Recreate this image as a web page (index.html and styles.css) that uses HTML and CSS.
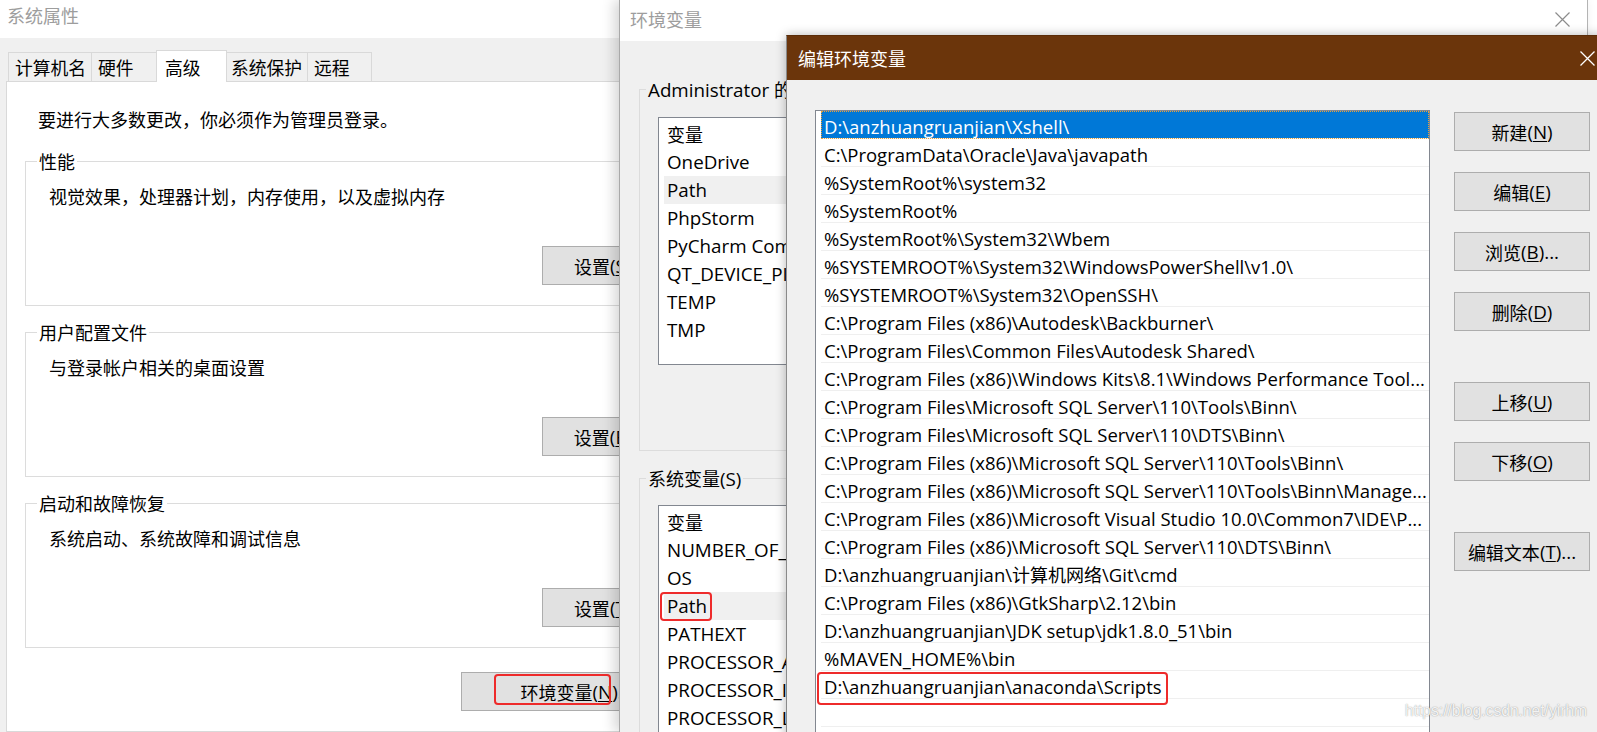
FILE: index.html
```html
<!DOCTYPE html>
<html lang="zh-CN">
<head>
<meta charset="utf-8">
<title>编辑环境变量</title>
<link rel="stylesheet" href="styles.css">
</head>
<body>
<div class="desk">

  <section class="win sys">
    <header class="sys-title">系统属性</header>
    <div class="sys-body">
      <nav class="tabs">
        <span class="tab">计算机名</span>
        <span class="tab">硬件</span>
        <span class="tab active">高级</span>
        <span class="tab">系统保护</span>
        <span class="tab">远程</span>
      </nav>
      <div class="panel">
        <p class="intro">要进行大多数更改，你必须作为管理员登录。</p>
        <fieldset class="grp first">
          <legend>性能</legend>
          <p class="desc">视觉效果，处理器计划，内存使用，以及虚拟内存</p>
          <div class="btnrow"><button class="btn set"><span class="zh">设置</span><span class="en">(<u>S</u>)...</span></button></div>
        </fieldset>
        <fieldset class="grp">
          <legend>用户配置文件</legend>
          <p class="desc">与登录帐户相关的桌面设置</p>
          <div class="btnrow"><button class="btn set"><span class="zh">设置</span><span class="en">(<u>E</u>)...</span></button></div>
        </fieldset>
        <fieldset class="grp">
          <legend>启动和故障恢复</legend>
          <p class="desc">系统启动、系统故障和调试信息</p>
          <div class="btnrow"><button class="btn set"><span class="zh">设置</span><span class="en">(<u>T</u>)...</span></button></div>
        </fieldset>
        <div class="envrow"><button class="btn envbtn"><span class="zh">环境变量</span><span class="en">(<u>N</u>)...</span><span class="redbox"></span></button></div>
      </div>
    </div>
  </section>

  <section class="win env">
    <header class="env-title">
      <span>环境变量</span>
      <svg class="close" width="15" height="15" viewBox="0 0 15 15"><path d="M0.5 0.5 L14.5 14.5 M14.5 0.5 L0.5 14.5" stroke="#8c8c8c" stroke-width="1.2" fill="none"/></svg>
    </header>
    <div class="env-body">
      <fieldset class="vgrp user">
        <legend><span class="en">Administrator </span><span class="zh">的用户变量(U)</span></legend>
        <div class="vlist short">
          <div class="vrow"><span class="zh">变量</span></div>
          <div class="vrow">OneDrive</div>
          <div class="vrow hi">Path</div>
          <div class="vrow">PhpStorm</div>
          <div class="vrow">PyCharm Community Edition</div>
          <div class="vrow">QT_DEVICE_PIXEL_RATIO</div>
          <div class="vrow">TEMP</div>
          <div class="vrow">TMP</div>
        </div>
      </fieldset>
      <fieldset class="vgrp system">
        <legend><span class="zh">系统变量</span><span class="en">(S)</span></legend>
        <div class="vlist tall">
          <div class="vrow"><span class="zh">变量</span></div>
          <div class="vrow">NUMBER_OF_PROCESSORS</div>
          <div class="vrow">OS</div>
          <div class="vrow hi mark">Path</div>
          <div class="vrow">PATHEXT</div>
          <div class="vrow">PROCESSOR_ARCHITECTURE</div>
          <div class="vrow">PROCESSOR_IDENTIFIER</div>
          <div class="vrow">PROCESSOR_LEVEL</div>
          <div class="vrow">PROCESSOR_REVISION</div>
        </div>
      </fieldset>
    </div>
  </section>

  <section class="win edit">
    <header class="edit-title">
      <span>编辑环境变量</span>
      <svg class="close" width="15" height="15" viewBox="0 0 15 15"><path d="M0.5 0.5 L14.5 14.5 M14.5 0.5 L0.5 14.5" stroke="#ffffff" stroke-width="1.3" fill="none"/></svg>
    </header>
    <div class="edit-body">
      <div class="plist">
        <div class="prow sel">D:\anzhuangruanjian\Xshell\</div>
        <div class="prow">C:\ProgramData\Oracle\Java\javapath</div>
        <div class="prow">%SystemRoot%\system32</div>
        <div class="prow">%SystemRoot%</div>
        <div class="prow">%SystemRoot%\System32\Wbem</div>
        <div class="prow">%SYSTEMROOT%\System32\WindowsPowerShell\v1.0\</div>
        <div class="prow">%SYSTEMROOT%\System32\OpenSSH\</div>
        <div class="prow">C:\Program Files (x86)\Autodesk\Backburner\</div>
        <div class="prow">C:\Program Files\Common Files\Autodesk Shared\</div>
        <div class="prow">C:\Program Files (x86)\Windows Kits\8.1\Windows Performance Tool...</div>
        <div class="prow">C:\Program Files\Microsoft SQL Server\110\Tools\Binn\</div>
        <div class="prow">C:\Program Files\Microsoft SQL Server\110\DTS\Binn\</div>
        <div class="prow">C:\Program Files (x86)\Microsoft SQL Server\110\Tools\Binn\</div>
        <div class="prow">C:\Program Files (x86)\Microsoft SQL Server\110\Tools\Binn\Manage...</div>
        <div class="prow">C:\Program Files (x86)\Microsoft Visual Studio 10.0\Common7\IDE\P...</div>
        <div class="prow">C:\Program Files (x86)\Microsoft SQL Server\110\DTS\Binn\</div>
        <div class="prow">D:\anzhuangruanjian\<span class="zh">计算机网络</span>\Git\cmd</div>
        <div class="prow">C:\Program Files (x86)\GtkSharp\2.12\bin</div>
        <div class="prow">D:\anzhuangruanjian\JDK setup\jdk1.8.0_51\bin</div>
        <div class="prow">%MAVEN_HOME%\bin</div>
        <div class="prow mark">D:\anzhuangruanjian\anaconda\Scripts</div>
        <div class="prow"></div>
        <div class="prow"></div>
      </div>
      <div class="pbtns">
        <button class="btn pbtn"><span class="zh">新建</span>(<u>N</u>)</button>
        <button class="btn pbtn"><span class="zh">编辑</span>(<u>E</u>)</button>
        <button class="btn pbtn"><span class="zh">浏览</span>(<u>B</u>)...</button>
        <button class="btn pbtn"><span class="zh">删除</span>(<u>D</u>)</button>
        <button class="btn pbtn gap"><span class="zh">上移</span>(<u>U</u>)</button>
        <button class="btn pbtn"><span class="zh">下移</span>(<u>O</u>)</button>
        <button class="btn pbtn gap"><span class="zh">编辑文本</span>(<u>T</u>)...</button>
      </div>
    </div>
  </section>

  <div class="watermark">https://blog.csdn.net/yirhm</div>
</div>
</body>
</html>
```

FILE: styles.css
```css
* { box-sizing: border-box; }

html, body {
  margin: 0;
  padding: 0;
}

body {
  width: 1597px;
  height: 732px;
  overflow: hidden;
  background: #ffffff;
  color: #000000;
  font-family: "Open Sans", "Noto Sans CJK SC", sans-serif;
  font-size: 18.8px;
}

.desk {
  position: relative;
  width: 1597px;
  height: 732px;
  overflow: hidden;
}

.zh {
  font-family: "Noto Sans CJK SC", "Open Sans", sans-serif;
  font-size: 18px;
}

.en {
  font-family: "Open Sans", "Noto Sans CJK SC", sans-serif;
  font-size: 18.8px;
}

u { text-decoration: underline; text-underline-offset: 2px; text-decoration-thickness: 1px; }

.win {
  position: absolute;
  top: 0;
}

/* ---------- 系统属性 ---------- */
.sys {
  left: 0;
  width: 720px;
  height: 732px;
  background: #ffffff;
  font-family: "Noto Sans CJK SC", "Open Sans", sans-serif;
  font-size: 18px;
}

.sys-title {
  height: 38px;
  display: flex;
  align-items: center;
  padding: 0 0 8px 7px;
  font-size: 18px;
  color: #9d9d9d;
}

.sys-body {
  background: #f0f0f0;
  height: 694px;
  padding: 12px 0 0 6px;
  display: flex;
  flex-direction: column;
}

.tabs {
  display: flex;
  align-items: flex-end;
  height: 31px;
  margin-left: 2px;
  position: relative;
  z-index: 1;
}

.tab {
  height: 29px;
  border: 1px solid #d9d9d9;
  border-bottom: none;
  margin-left: -1px;
  padding-left: 6px;
  display: flex;
  align-items: center;
  background: #f0f0f0;
  white-space: nowrap;
  font-size: 17.8px;
}

.tab:nth-child(1) { margin-left: 0; width: 84px; }
.tab:nth-child(2) { width: 66px; }
.tab:nth-child(3) { width: 71px; }
.tab:nth-child(4) { width: 82px; padding-left: 4px; }
.tab:nth-child(5) { width: 65px; }

.tab.active {
  height: 32px;
  margin-bottom: -1px;
  background: #ffffff;
  padding-left: 8px;
}

.panel {
  flex: 1;
  background: #ffffff;
  border: 1px solid #d9d9d9;
  border-right: none;
}

.intro {
  margin: 25px 0 0 31px;
  line-height: 24px;
}

.grp {
  margin: 14px 0 0 18px;
  width: 671px;
  min-width: 0;
  border: 1px solid #dcdcdc;
  padding: 0 0 20px 0;
}

.grp.first { margin-top: 18px; }

.grp legend {
  margin-left: 11px;
  padding: 0 2px;
  line-height: 24px;
}

.desc {
  margin: 11px 0 0 23px;
  line-height: 24px;
}

.btnrow {
  display: flex;
  justify-content: flex-end;
  padding-right: 17px;
  margin-top: 38px;
}

.btn {
  height: 39px;
  background: #e1e1e1;
  border: 1px solid #adadad;
  border-radius: 0;
  padding: 0;
  margin: 0;
  display: flex;
  align-items: center;
  justify-content: center;
  color: #000000;
  font-family: "Open Sans", "Noto Sans CJK SC", sans-serif;
  font-size: 18.8px;
  white-space: nowrap;
}

.btn .zh { font-size: 18px; }

.set { width: 136px; }

.envrow {
  display: flex;
  justify-content: flex-end;
  padding-right: 28px;
  margin-top: 24px;
}

.envbtn {
  width: 231px;
  position: relative;
}

.redbox {
  position: absolute;
  left: 32px;
  top: 1px;
  width: 117px;
  height: 31px;
  border: 2px solid #ee2b2b;
  border-radius: 4px;
}

/* ---------- 环境变量 ---------- */
.env {
  left: 619px;
  width: 969px;
  height: 732px;
  background: #f0f0f0;
  border-left: 1px solid #a9a9a9;
  border-right: 1px solid #b4b4b4;
  box-shadow: -5px 0 12px rgba(0, 0, 0, 0.16);
}

.env-title {
  height: 41px;
  background: #ffffff;
  display: flex;
  align-items: center;
  padding: 0 17px 3px 10px;
  font-family: "Noto Sans CJK SC", sans-serif;
  font-size: 18px;
  color: #9d9d9d;
}

.close { margin-left: auto; display: block; }

.env-body {
  padding: 36px 0 0 19px;
}

.vgrp {
  margin: 0;
  width: 900px;
  min-width: 0;
  border: 1px solid #dcdcdc;
  padding: 0;
}

.vgrp legend {
  margin-left: 6px;
  padding: 0 2px;
  line-height: 24px;
}

.vgrp.user { padding-bottom: 85px; }
.vgrp.system { margin-top: 15px; }

.vlist {
  margin: 15px 0 0 18px;
  width: 520px;
  background: #ffffff;
  border: 1px solid #828790;
  padding-top: 2px;
}

.vlist.short { height: 248px; }
.vlist.tall { margin-top: 14px; height: 300px; }

.vrow {
  height: 28px;
  line-height: 28px;
  margin-left: 5px;
  padding-left: 3px;
  white-space: nowrap;
  overflow: hidden;
}

.vrow.hi { background: #f0f0f0; }

.vrow.mark { position: relative; overflow: visible; }
.vrow.mark::after {
  content: "";
  position: absolute;
  left: -4px;
  top: 0;
  width: 48px;
  height: 25px;
  border: 2px solid #ee2b2b;
  border-radius: 4px;
}

/* ---------- 编辑环境变量 ---------- */
.edit {
  left: 786px;
  top: 35px;
  width: 830px;
  height: 710px;
  background: #f0f0f0;
  border: 1px solid #8a8a8a;
  border-top-color: #5a2c08;
  box-shadow: 0 0 10px rgba(0, 0, 0, 0.28);
}

.edit-title {
  height: 44px;
  background: #6b350b;
  color: #ffffff;
  display: flex;
  align-items: center;
  padding: 0 20px 0 11px;
  font-family: "Noto Sans CJK SC", sans-serif;
  font-size: 18px;
}

.edit-body {
  display: flex;
  align-items: flex-start;
  padding: 30px 0 0 28px;
}

.plist {
  width: 615px;
  height: 640px;
  background: #ffffff;
  border: 1px solid #828790;
  overflow: hidden;
  font-size: 18.5px;
}

.prow {
  height: 28px;
  line-height: 27px;
  padding-top: 2px;
  border-bottom: 1px solid #efefef;
  margin-left: 5px;
  padding-left: 3px;
  white-space: nowrap;
  overflow: hidden;
}

.prow.sel {
  background: #0078d7;
  color: #ffffff;
  outline: 1px dotted #e8a23a;
  outline-offset: -1px;
}

.prow.mark { position: relative; overflow: visible; }
.prow.mark::after {
  content: "";
  position: absolute;
  left: -4px;
  top: 1px;
  width: 347px;
  height: 29px;
  border: 2px solid #ee2b2b;
  border-radius: 4px;
}

.pbtns {
  margin-left: 24px;
  padding-top: 2px;
  display: flex;
  flex-direction: column;
}

.pbtn { width: 136px; }
.pbtn + .pbtn { margin-top: 21px; }
.pbtn.gap { margin-top: 51px; }

.watermark {
  position: absolute;
  left: 1405px;
  top: 702px;
  font-family: "Liberation Sans", sans-serif;
  font-size: 15.6px;
  color: rgba(255, 255, 255, 0.9);
  text-shadow: 0 0 1px rgba(0, 0, 0, 0.35), 0 0 2px rgba(0, 0, 0, 0.15);
  white-space: nowrap;
}
```
